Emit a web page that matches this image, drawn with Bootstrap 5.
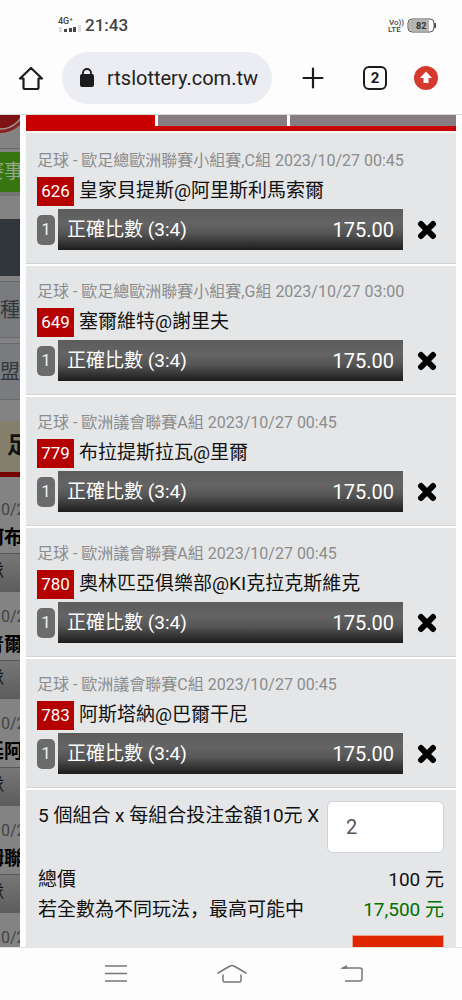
<!DOCTYPE html>
<html lang="zh-Hant">
<head>
<meta charset="utf-8">
<meta name="viewport" content="width=device-width, initial-scale=1">
<title>投注單</title>
<link rel="stylesheet" href="https://cdn.jsdelivr.net/npm/bootstrap@5.3.0/dist/css/bootstrap.min.css">
<style>
  body { font-family: Roboto, "Noto Sans CJK TC", sans-serif; font-size: 19px; line-height: 30px; color: #111; background: #fdfdfd; }
  button { padding: 0; border: 0; background: none; color: inherit; }
  svg { display: block; }

  /* phone chrome */
  .status-bar { height: 42px; padding: 10px 26px 0 57px; color: #444; }
  .clock { font-size: 17px; font-weight: 500; line-height: 22px; }
  .toolbar { height: 73px; padding: 0 24px 0 18px; border-bottom: 1px solid #d8d8d8; }
  .address { height: 52px; margin: 0 30px 0 18px; padding: 0 8px 0 17px; border-radius: 26px; background: #ecedf2; }
  .address-input { width: 100%; min-width: 0; padding: 0; border: 0; background: none; font-size: 20px; color: #222; outline: 0; }
  .tab-count { width: 24px; height: 24px; margin: 0 27px 0 39px; border: 2px solid #1c1c1c; border-radius: 6px; font-size: 15px; font-weight: 700; line-height: 20px; color: #1c1c1c; }
  .system-nav { height: 53px; padding: 0 98px 0 104px; background: #fdfdfd; border-top: 1px solid #e2e2e2; }

  /* dimmed page behind the slip */
  .stage { overflow: hidden; min-height: 0; }
  .behind { width: 20px; overflow: hidden; background: #838383; color: #333; white-space: nowrap; }
  .clip-end { display: flex; justify-content: flex-end; align-items: center; width: 23px; overflow: hidden; }
  .promo { height: 40px; background: #36750f; color: #96a98b; }
  .dark-band { height: 57px; margin-bottom: 5px; background: #31363d; }
  .filter-box { width: 20px; height: 57px; margin-bottom: 5px; background: #797b7e; border: 1px solid #666a6e; border-width: 1px 0; color: #33373b; font-size: 20px; }
  .sport-tab { height: 56px; margin: 21px 0 18px; padding: 10px 0 0 7px; background: #84806b; border-bottom: 5px solid #780000; font-size: 23px; font-weight: 700; color: #111; }
  .game-date { height: 28px; padding-left: 1px; font-size: 16px; line-height: 30px; color: #444; }
  .game-team { height: 30px; font-size: 19px; font-weight: 700; color: #000; }
  .game-type { height: 39px; margin-bottom: 10px; background: linear-gradient(#777, #5c5c5c); border-top: 1px solid #555; color: #111; }
  .game-type .clip-end { width: 4px; }

  /* bet slip */
  .slip { margin: 0 6px; background: #e4e6e8; }
  .slip-tabs { height: 16px; gap: 3px; background: #fff; border-bottom: 5px solid #c80000; }
  .slip-tabs button { flex: 0 0 30%; height: 11px; background: #877c82; }
  .slip-tabs button.active { background: #c80000; }
  .bet-list { padding-top: 2px; border-top: 2px solid #f6f6f6; }
  .bet { height: 131px; padding: 11px 19px 0 11px; border-bottom: 2px solid #fff; box-shadow: inset 0 -1px #d2d4d6; }
  .bet-meta { font-size: 16px; color: #8b8c8e; }
  .bet-no { width: 37px; height: 29px; margin-right: 5px; background: #b50000; color: #fff; font-size: 17px; line-height: 28px; }
  .bet-row { margin-top: 3px; }
  .bet-count { width: 18px; height: 30px; margin-right: 3px; border-radius: 5px; background: #6b6b6b; color: #eee; font-size: 17px; line-height: 28px; }
  .bet-odds { height: 41px; margin-right: 14px; padding: 0 9px; background: linear-gradient(#5c5c5c, #646464 35%, #555 60%, #222 96%, #1c1c1c); color: #fff; }
  .price { font-size: 20px; }
  .summary { padding: 11px 12px 0; }
  .stake { width: 117px; height: 52px; margin-bottom: 12px; padding: 0 18px; border: 1px solid #cdd2d8; border-radius: 6px; background: #fff; color: #555; font-size: 20px; }
  .total-row { height: 30px; }
  .comma { font-family: "Noto Sans CJK SC", sans-serif; line-height: 1; }
  .win { color: #007000; }
  .submit { width: 92px; height: 40px; margin-top: 10px; background: #de2600; border: 1px solid #f0a090; color: #fff; }
</style>
</head>
<body>
<div class="d-flex flex-column vh-100 overflow-hidden">
  <header class="flex-shrink-0">
    <div class="status-bar d-flex align-items-start">
      <svg width="24" height="28" viewBox="0 0 24 28" class="me-1" aria-label="4G+">
        <text x="1" y="14" font-size="9" font-weight="500" fill="#444">4G⁺</text>
        <path d="M3.500 17v5M1.500 19l2-2 2 2M1.500 20l2 2 2-2" stroke="#ccc" fill="none"/>
        <path d="M7 19h3v3H7zM12 18h3v4h-3zM16 17h3v5h-3z" fill="#444"/><path d="M21 15h3v7h-3z" fill="#ddd"/>
      </svg>
      <span class="clock mt-1">21:43</span>
      <svg width="48" height="30" viewBox="0 0 48 30" class="ms-auto" aria-label="82%">
        <g fill="#444" font-size="8" font-weight="500"><text x="1" y="15">Vo))</text><text x="0" y="22">LTE</text></g>
        <rect x="20" y="9" width="26" height="13" rx="4" fill="#fff" stroke="#555"/>
        <path d="M24 10h17v11H24q-3 0-3-3v-5q0-3 3-3" fill="#b4b4b4"/><path d="M47 13v5" stroke="#555" stroke-width="2"/>
        <text x="28" y="18.500" font-size="9" font-weight="700" fill="#333">82</text>
      </svg>
    </div>
    <div class="toolbar d-flex align-items-center">
      <button aria-label="Home"><svg width="26" height="26" viewBox="0 0 26 26" fill="none" stroke="#1c1c1c" stroke-width="2.200" stroke-linejoin="round" stroke-linecap="round"><path d="M2 13.500L13 3l11 10.500M2 13.500h3.500M24 13.500h-3.500M5.500 13.500V23q0 1 1 1h13q1 0 1-1v-9.500"/></svg></button>
      <label class="address d-flex align-items-center flex-grow-1">
        <svg width="16" height="20" viewBox="0 0 16 20" class="flex-shrink-0 me-2"><rect x="1" y="6" width="14" height="13" rx="2" fill="#1c1c1c"/><path d="M4 7V5a4 4 0 0 1 8 0v2" fill="none" stroke="#1c1c1c" stroke-width="1.800"/></svg>
        <input class="address-input ms-1" value="rtslottery.com.tw" aria-label="網址">
      </label>
      <button aria-label="New tab"><svg width="22" height="22" viewBox="0 0 22 22"><path d="M11 1.500v19M1.500 11h19" stroke="#1c1c1c" stroke-width="2.200" stroke-linecap="round"/></svg></button>
      <button class="tab-count text-center flex-shrink-0">2</button>
      <button aria-label="Update"><svg width="24" height="24" viewBox="0 0 24 24"><circle cx="12" cy="12" r="12" fill="#d53a2f"/><path d="M12 5.500l6 6.500h-3.500v5h-5v-5H6z" fill="#fff"/></svg></button>
    </div>
  </header>

  <div class="stage d-flex flex-grow-1">
    <aside class="behind flex-shrink-0" aria-hidden="true">
      <svg width="20" height="37" viewBox="0 0 20 37"><circle cx="0" cy="-11" r="29" fill="#8b2222"/><circle cx="0" cy="-11" r="25" fill="#7c1414" stroke="#999" stroke-width="1.500"/><path d="M0 33.500h20" stroke="#6a6a6a"/></svg>
      <div class="promo clip-end">賽事</div>
      <svg width="20" height="27" viewBox="0 0 20 27"><path d="M0 0h20v4H0z" fill="#747474"/></svg>
      <div class="dark-band"></div>
      <div class="filter-box clip-end">種</div>
      <div class="filter-box clip-end">盟</div>
      <div class="sport-tab">足</div>
      <div id="games"></div>
    </aside>

    <main class="slip flex-grow-1">
      <nav class="slip-tabs d-flex"><button class="active" aria-label="過關"></button><button aria-label="單場"></button><button class="flex-grow-1" aria-label="系統"></button></nav>
      <div id="bets" class="bet-list"></div>
      <section class="summary">
        <div class="d-flex justify-content-between text-nowrap"><label for="stake">5 個組合 x 每組合投注金額10元 X</label><input id="stake" class="stake" value="2"></div>
        <div class="total-row d-flex justify-content-between"><span>總價</span><span>100 元</span></div>
        <div class="total-row d-flex justify-content-between"><span>若全數為不同玩法<span class="comma" lang="zh-Hans">，</span>最高可能中</span><span class="win">17,500 元</span></div>
        <button class="submit d-block ms-auto" aria-label="投注"></button>
      </section>
    </main>
  </div>
  <nav class="system-nav d-flex align-items-center flex-shrink-0">
    <div class="d-flex justify-content-between flex-grow-1">
      <button aria-label="Menu"><svg width="24" height="20" viewBox="0 0 24 20"><path d="M1 2h22M1 9.500h22M1 17h22" stroke="#777" stroke-width="1.500"/></svg></button>
      <button class="me-1" aria-label="Home"><svg width="30" height="20" viewBox="0 0 30 20" fill="none" stroke="#777" stroke-width="1.500" stroke-linecap="round"><path d="M1 9L13 2q2-1 4 0l12 7M6 11v5q0 2 2 2h14q2 0 2-2v-5"/></svg></button>
      <button aria-label="Back"><svg width="24" height="20" viewBox="0 0 24 20"><path d="M2 4h18q2 0 2 2v9q0 2-2 2H5" fill="none" stroke="#777" stroke-width="1.500"/><path d="M0 4.700L7 1v3.700z" fill="#777"/></svg></button>
    </div>
  </nav>
</div>
<script>
  const bets = [
    ["歐足總歐洲聯賽小組賽,C組 2023/10/27 00:45", 626, "皇家貝提斯@阿里斯利馬索爾"],
    ["歐足總歐洲聯賽小組賽,G組 2023/10/27 03:00", 649, "塞爾維特@謝里夫"],
    ["歐洲議會聯賽A組 2023/10/27 00:45", 779, "布拉提斯拉瓦@里爾"],
    ["歐洲議會聯賽A組 2023/10/27 00:45", 780, "奧林匹亞俱樂部@KI克拉克斯維克"],
    ["歐洲議會聯賽C組 2023/10/27 00:45", 783, "阿斯塔納@巴爾干尼"]
  ];
  document.getElementById("bets").innerHTML = bets.map(([meta, no, teams]) => `
    <article class="bet">
      <div class="bet-meta text-nowrap">足球 - ${meta}</div>
      <div class="d-flex align-items-center text-nowrap"><span class="bet-no text-center">${no}</span>${teams}</div>
      <div class="bet-row d-flex align-items-center">
        <span class="bet-count text-center">1</span>
        <div class="bet-odds d-flex align-items-center justify-content-between flex-grow-1"><span>正確比數 (3:4)</span><span class="price">175.00</span></div>
        <button aria-label="移除"><svg width="20" height="20" viewBox="0 0 20 20"><path d="M4 4l12 12M16 4L4 16" stroke="#000" stroke-width="6" stroke-linecap="round"/></svg></button>
      </div>
    </article>`).join("");

  document.getElementById("games").innerHTML = ["何布", "普爾", "廷阿", "姆聯", ""].map(team => `
    <div class="game-date">0/27</div>
    <div class="game-team clip-end">${team}</div>
    <div class="game-type d-flex"><span class="clip-end">隊</span></div>`).join("");
</script>
<script src="https://cdn.jsdelivr.net/npm/bootstrap@5.3.0/dist/js/bootstrap.bundle.min.js"></script>
</body>
</html>
